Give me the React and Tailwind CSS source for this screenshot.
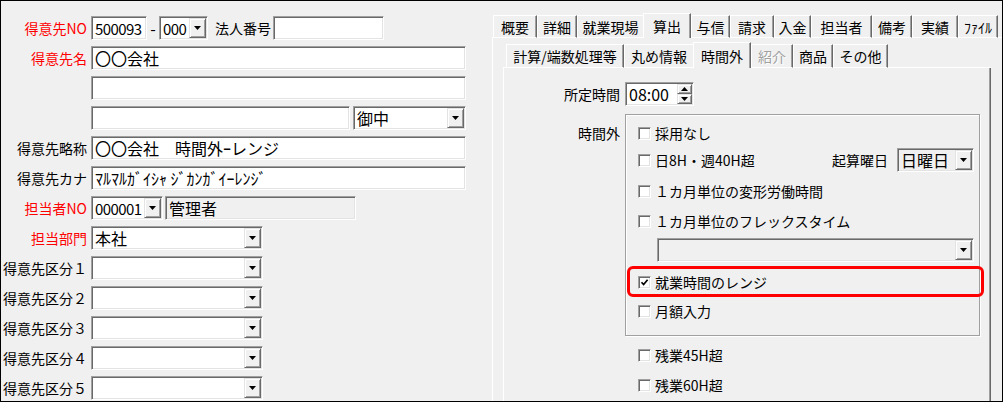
import React from "react";

const sunken =
  "border border-t-[#a0a0a0] border-l-[#a0a0a0] border-r-white border-b-white shadow-[inset_1px_1px_0_#696969,inset_-1px_-1px_0_#e3e3e3]";
const raised =
  "border border-t-[#e3e3e3] border-l-[#e3e3e3] border-r-[#696969] border-b-[#696969] shadow-[inset_1px_1px_0_#ffffff,inset_-1px_-1px_0_#a0a0a0] bg-[#f0f0f0]";

const numCls = "text-[15px] tracking-[-0.6px]";
const txtCls = "text-[16px]";

function Arrow({ up }) {
  return (
    <svg width="7" height="4" viewBox="0 0 7 4">
      {up ? <polygon points="0,4 7,4 3.5,0" fill="#000" /> : <polygon points="0,0 7,0 3.5,4" fill="#000" />}
    </svg>
  );
}

function DropBtn() {
  return (
    <div className={`w-[17px] m-[1px] shrink-0 flex items-center justify-center ${raised}`}>
      <Arrow />
    </div>
  );
}

function Input({ cls, text, bg, num }) {
  return (
    <div className={`${cls} h-[24px] ${bg || "bg-white"} ${sunken} flex items-center pl-[3px] ${num ? numCls : txtCls} leading-none whitespace-nowrap overflow-hidden shrink-0`}>
      {text}
    </div>
  );
}

function Combo({ cls, text, bg, num }) {
  return (
    <div className={`${cls} h-[24px] ${bg || "bg-white"} ${sunken} flex items-stretch shrink-0`}>
      <div className={`flex-1 min-w-0 pl-[3px] flex items-center ${num ? numCls : txtCls} leading-none whitespace-nowrap overflow-hidden`}>
        {text}
      </div>
      <DropBtn />
    </div>
  );
}

function Row({ label, red, children }) {
  return (
    <div className="flex items-center h-[24px] gap-[4px]">
      <div className={`w-[86px] shrink-0 text-right text-[14px] leading-none whitespace-nowrap ${red ? "text-[#ff0000]" : "text-black"}`}>
        {label}
      </div>
      <div className="flex items-center">{children}</div>
    </div>
  );
}

function Check({ checked }) {
  return (
    <div className={`w-[13px] h-[13px] shrink-0 bg-white ${sunken} flex items-center justify-center`}>
      {checked && (
        <svg width="9" height="9" viewBox="0 0 9 9">
          <path d="M1.5 4.2 L3.6 6.5 L7.6 1.8" fill="none" stroke="#000" strokeWidth="1.7" />
        </svg>
      )}
    </div>
  );
}

function CheckRow({ text, checked, cls }) {
  return (
    <div className={`flex items-center h-[26px] pl-[12px] ${cls || ""}`}>
      <Check checked={checked} />
      <span className="ml-[4px] text-[14px] leading-none whitespace-nowrap">{text}</span>
    </div>
  );
}

const outerTabs = [
  { t: "概要", w: "w-[44px]" },
  { t: "詳細", w: "w-[40px]" },
  { t: "就業現場", w: "w-[66px]", noRight: true },
  { t: "算出", w: "w-[48px]", sel: true },
  { t: "与信", w: "w-[39px]" },
  { t: "請求", w: "w-[44px]" },
  { t: "入金", w: "w-[37px]" },
  { t: "担当者", w: "w-[61px]" },
  { t: "備考", w: "w-[40px]" },
  { t: "実績", w: "w-[46px]" },
  { t: "ﾌｧｲﾙ", w: "w-[40px]" },
];

const innerTabs = [
  { t: "計算/端数処理等", w: "w-[118px]" },
  { t: "丸め情報", w: "w-[69px]", noRight: true },
  { t: "時間外", w: "w-[58px]", sel: true },
  { t: "紹介", w: "w-[42px]", dis: true },
  { t: "商品", w: "w-[40px]" },
  { t: "その他", w: "w-[55px]" },
];

function Tab({ tab, unselH, selH }) {
  if (tab.sel) {
    return (
      <div className={`${tab.w} ${selH} shrink-0 border-t border-l border-white border-r border-r-[#696969] shadow-[inset_-1px_0_0_#a0a0a0] flex items-center justify-center text-[14px] leading-none whitespace-nowrap`}>
        {tab.t}
      </div>
    );
  }
  const right = tab.noRight
    ? "border-r-0"
    : "border-r border-r-[#696969] shadow-[inset_-1px_0_0_#a0a0a0]";
  return (
    <div className={`${tab.w} ${unselH} shrink-0 border-t border-l border-b border-white ${right} flex items-center justify-center text-[14px] leading-none whitespace-nowrap ${tab.dis ? "text-[#a0a0a0] [text-shadow:1px_1px_0_#ffffff]" : "text-black"}`}>
      {tab.t}
    </div>
  );
}

export default function App() {
  return (
    <div className="w-[1003px] h-[402px] border border-black bg-[#f0f0f0] flex overflow-hidden text-black font-['Noto_Sans_CJK_JP','Noto_Sans',sans-serif]">
      {/* Left form */}
      <div className="w-[491px] shrink-0 flex flex-col gap-[6px] pt-[15px]">
        <Row label="得意先NO" red>
          <Input cls="w-[56px]" text="500093" num />
          <span className="w-[12px] text-center text-[16px] leading-none">-</span>
          <Combo cls="w-[49px]" text="000" num />
          <span className="ml-[7px] text-[14px] leading-none whitespace-nowrap">法人番号</span>
          <Input cls="ml-[2px] w-[111px]" text="" />
        </Row>
        <Row label="得意先名" red>
          <Input cls="w-[375px]" text="〇〇会社" />
        </Row>
        <Row label="">
          <Input cls="w-[375px]" text="" />
        </Row>
        <Row label="">
          <Input cls="w-[259px]" text="" />
          <Combo cls="ml-[3px] w-[113px]" text="御中" />
        </Row>
        <Row label="得意先略称">
          <Input cls="w-[375px]" text="〇〇会社　時間外ｰレンジ" />
        </Row>
        <Row label="得意先カナ">
          <Input cls="w-[375px]" text="ﾏﾙﾏﾙｶﾞｲｼｬ ｼﾞｶﾝｶﾞｲｰﾚﾝｼﾞ" />
        </Row>
        <Row label="担当者NO" red>
          <Combo cls="w-[72px]" text="000001" num />
          <Input cls="ml-[2px] w-[191px]" text="管理者" bg="bg-[#f0f0f0]" />
        </Row>
        <Row label="担当部門" red>
          <Combo cls="w-[172px]" text="本社" />
        </Row>
        <Row label="得意先区分１">
          <Combo cls="w-[172px]" text="" />
        </Row>
        <Row label="得意先区分２">
          <Combo cls="w-[172px]" text="" />
        </Row>
        <Row label="得意先区分３">
          <Combo cls="w-[172px]" text="" />
        </Row>
        <Row label="得意先区分４">
          <Combo cls="w-[172px]" text="" />
        </Row>
        <Row label="得意先区分５">
          <Combo cls="w-[172px]" text="" />
        </Row>
      </div>

      {/* Right tabs */}
      <div className="flex-1 min-w-0 flex flex-col pt-[12px] overflow-hidden">
        <div className="flex items-end h-[25px] shrink-0">
          <div className="w-[1px] h-[1px] bg-white shrink-0" />
          {outerTabs.map((tab) => (
            <Tab key={tab.t} tab={tab} unselH="h-[23px]" selH="h-[25px]" />
          ))}
          <div className="flex-1 h-[1px] bg-white" />
        </div>
        <div className="flex-1 border-l border-white flex flex-col">
          <div className="ml-[10px] mt-[4px] w-[488px] flex items-end h-[26px] shrink-0">
            <div className="w-[3px] h-[1px] bg-white shrink-0" />
            {innerTabs.map((tab) => (
              <Tab key={tab.t} tab={tab} unselH="h-[24px]" selH="h-[26px]" />
            ))}
            <div className="flex-1 h-[1px] bg-white" />
          </div>
          <div className="ml-[10px] w-[488px] flex-1 border-l border-white border-r border-r-[#696969] shadow-[inset_-1px_0_0_#a0a0a0] flex flex-col pt-[14px]">
            {/* 所定時間 */}
            <div className="flex items-center h-[24px]">
              <div className="w-[116px] shrink-0 text-right text-[14px] leading-none">所定時間</div>
              <div className={`ml-[5px] w-[69px] h-[24px] bg-white ${sunken} flex items-stretch`}>
                <div className="flex-1 pl-[3px] flex items-center text-[16px] leading-none">08:00</div>
                <div className="w-[15px] m-[1px] flex flex-col">
                  <div className={`flex-1 flex items-center justify-center ${raised}`}>
                    <Arrow up />
                  </div>
                  <div className={`flex-1 flex items-center justify-center ${raised}`}>
                    <Arrow />
                  </div>
                </div>
              </div>
            </div>

            {/* 時間外 group */}
            <div className="flex mt-[8px]">
              <div className="w-[116px] shrink-0 text-right text-[14px] leading-none pt-[12px]">時間外</div>
              <div className="ml-[5px] w-[355px] h-[222px] border border-[#a0a0a0] shadow-[inset_1px_1px_0_#ffffff,1px_1px_0_#ffffff] flex flex-col pt-[5px]">
                <CheckRow text="採用なし" />
                <div className="flex items-center h-[24px] pl-[12px] pr-[5px] mt-[2px]">
                  <Check />
                  <span className="ml-[4px] text-[14px] leading-none whitespace-nowrap">日8H・週40H超</span>
                  <span className="ml-auto text-[14px] leading-none whitespace-nowrap">起算曜日</span>
                  <Combo cls="ml-[9px] w-[77px]" text="日曜日" bg="bg-[#f0f0f0]" />
                </div>
                <CheckRow text="１カ月単位の変形労働時間" cls="mt-[6px]" />
                <CheckRow text="１カ月単位のフレックスタイム" cls="mt-[4px]" />
                <div className="mt-[4px] ml-[31px]">
                  <Combo cls="w-[317px]" text="" bg="bg-[#f0f0f0]" />
                </div>
                <div className="relative mt-[7px]">
                  <CheckRow text="就業時間のレンジ" checked />
                  <div className="absolute left-[1px] -right-[5px] -top-[3px] -bottom-[2px] border-[3px] border-[#ff0000] rounded-[6px] pointer-events-none" />
                </div>
                <CheckRow text="月額入力" cls="mt-[3px]" />
              </div>
            </div>

            <div className="ml-[122px] mt-[6px] flex flex-col gap-[4px]">
              <CheckRow text="残業45H超" />
              <CheckRow text="残業60H超" />
            </div>
          </div>
        </div>
      </div>
    </div>
  );
}
